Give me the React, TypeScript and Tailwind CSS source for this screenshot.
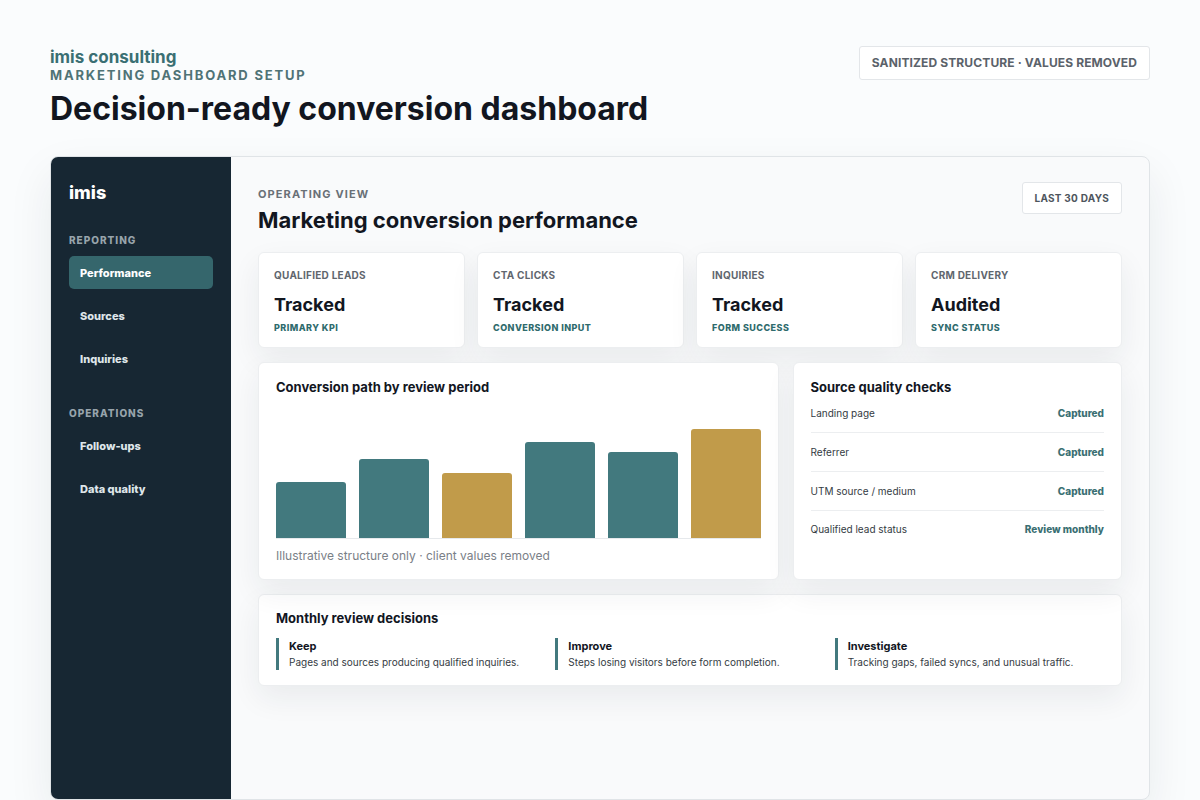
const navGroups = [
  { title: "Reporting", items: ["Performance", "Sources", "Inquiries"] },
  { title: "Operations", items: ["Follow-ups", "Data quality"] },
];

const metrics = [
  { label: "Qualified leads", value: "Tracked", note: "Primary KPI" },
  { label: "CTA clicks", value: "Tracked", note: "Conversion input" },
  { label: "Inquiries", value: "Tracked", note: "Form success" },
  { label: "CRM delivery", value: "Audited", note: "Sync status" },
];

const bars = [
  { height: 56, accent: false },
  { height: 79, accent: false },
  { height: 65, accent: true },
  { height: 96, accent: false },
  { height: 86, accent: false },
  { height: 109, accent: true },
];

const checks = [
  { name: "Landing page", status: "Captured" },
  { name: "Referrer", status: "Captured" },
  { name: "UTM source / medium", status: "Captured" },
  { name: "Qualified lead status", status: "Review monthly" },
];

const decisions = [
  { title: "Keep", text: "Pages and sources producing qualified inquiries." },
  { title: "Improve", text: "Steps losing visitors before form completion." },
  { title: "Investigate", text: "Tracking gaps, failed syncs, and unusual traffic." },
];

const card =
  "rounded-md border border-[#eceef0] bg-white shadow-[0_12px_30px_rgba(22,38,50,0.07)]";

function Sidebar() {
  return (
    <aside className="w-[180px] shrink-0 bg-[#172733] px-[18px] pt-6">
      <div className="text-lg leading-6 font-extrabold text-white">imis</div>
      <nav className="mt-[27px] flex flex-col gap-[30px]">
        {navGroups.map((group, g) => (
          <section key={group.title}>
            <h3 className="text-[10px] leading-4 font-extrabold tracking-widest text-[#98a4ac] uppercase">
              {group.title}
            </h3>
            <ul className="mt-2 flex flex-col gap-[10px]">
              {group.items.map((item, i) => (
                <li key={item}>
                  <a
                    href="#"
                    className={
                      g === 0 && i === 0
                        ? "block rounded-[5px] bg-[#35666c] px-[11px] pt-[9px] pb-2 text-[11px] leading-4 font-extrabold text-white"
                        : "block rounded-[5px] px-[11px] pt-[9px] pb-2 text-[11px] leading-4 font-extrabold text-[#dfe6ea]"
                    }
                  >
                    {item}
                  </a>
                </li>
              ))}
            </ul>
          </section>
        ))}
      </nav>
    </aside>
  );
}

export default function App() {
  return (
    <div className="flex min-h-screen flex-col bg-[#fafcfd] px-[50px] pt-[46px] font-['Inter',sans-serif] text-[#12161f]">
      <header className="flex items-start justify-between gap-6">
        <div>
          <div className="text-[17px] leading-[22px] font-bold text-[#3a6f73]">imis consulting</div>
          <p className="text-[13px] leading-[14px] font-bold tracking-[0.14em] text-[#4f7376] uppercase">
            Marketing dashboard setup
          </p>
          <h1 className="mt-[7px] text-[32px] leading-10 font-bold">
            Decision-ready conversion dashboard
          </h1>
        </div>
        <div className="rounded-[3px] border border-[#e3e6e9] bg-white px-3 py-2 text-xs leading-4 font-bold tracking-[0.01em] text-[#5b626a] uppercase">
          Sanitized structure · values removed
        </div>
      </header>

      <div className="mt-[27px] flex flex-1 overflow-hidden rounded-lg border border-[#e0e4e7] bg-[#f9fafb] shadow-[0_18px_45px_rgba(22,38,50,0.08)]">
        <Sidebar />

        <main className="min-w-0 flex-1 px-[27px] pt-[25px] pb-8">
          <div className="flex items-start justify-between gap-4">
            <div>
              <p className="mt-1 text-[11px] leading-4 font-bold tracking-widest text-[#697077] uppercase">
                Operating view
              </p>
              <h2 className="mt-1 text-[22px] leading-7 font-bold">
                Marketing conversion performance
              </h2>
            </div>
            <button
              type="button"
              className="rounded-[3px] border border-[#e3e6e9] bg-white px-3 py-[7px] text-[10px] leading-4 font-bold tracking-wide text-[#4e555d] uppercase"
            >
              Last 30 days
            </button>
          </div>

          <div className="mt-[18px] grid grid-cols-4 gap-3">
            {metrics.map((m) => (
              <article key={m.label} className={`${card} px-[15px] pt-3.5 pb-[13px]`}>
                <h3 className="text-[10px] leading-4 font-bold tracking-wide text-[#5f666e] uppercase">
                  {m.label}
                </h3>
                <div className="mt-2.5 text-lg leading-6 font-bold">{m.value}</div>
                <p className="mt-[5px] text-[9px] leading-3 font-extrabold tracking-wider text-[#2f6b6d] uppercase">
                  {m.note}
                </p>
              </article>
            ))}
          </div>

          <div className="mt-3.5 grid grid-cols-[1.58fr_1fr] gap-3.5">
            <section className={`${card} px-[17px] pt-4 pb-3.5`}>
              <h3 className="text-[13px] leading-4 font-bold">Conversion path by review period</h3>
              <div className="mt-3 flex h-[132px] items-end gap-[13px] border-b border-[#e6e9ec]">
                {bars.map((bar, i) => (
                  <div
                    key={i}
                    className={
                      bar.accent
                        ? "flex-1 rounded-t-[3px] bg-[#c19b4a]"
                        : "flex-1 rounded-t-[3px] bg-[#42797e]"
                    }
                    style={{ height: bar.height }}
                  />
                ))}
              </div>
              <p className="mt-2 text-xs leading-[18px] text-[#7a8087]">
                Illustrative structure only · client values removed
              </p>
            </section>

            <section className={`${card} px-[17px] pt-4 pb-3.5`}>
              <h3 className="text-[13px] leading-4 font-bold">Source quality checks</h3>
              <dl className="divide-y divide-[#eceef0]">
                {checks.map((c) => (
                  <div
                    key={c.name}
                    className="flex justify-between gap-3 py-[11px] text-[10px] leading-4 first:pt-2.5 last:pt-2.5"
                  >
                    <dt className="text-[#343b43]">{c.name}</dt>
                    <dd className="font-extrabold text-[#3a6f73]">{c.status}</dd>
                  </div>
                ))}
              </dl>
            </section>
          </div>

          <section className={`${card} mt-3.5 px-[17px] py-[15px]`}>
            <h3 className="text-[13px] leading-4 font-bold">Monthly review decisions</h3>
            <div className="mt-3 grid grid-cols-3 gap-2.5">
              {decisions.map((d) => (
                <div key={d.title} className="border-l-[3px] border-[#42797e] pl-2.5">
                  <h4 className="text-[11px] leading-4 font-bold">{d.title}</h4>
                  <p className="text-[10px] leading-4 text-[#343b43]">{d.text}</p>
                </div>
              ))}
            </div>
          </section>
        </main>
      </div>
    </div>
  );
}
